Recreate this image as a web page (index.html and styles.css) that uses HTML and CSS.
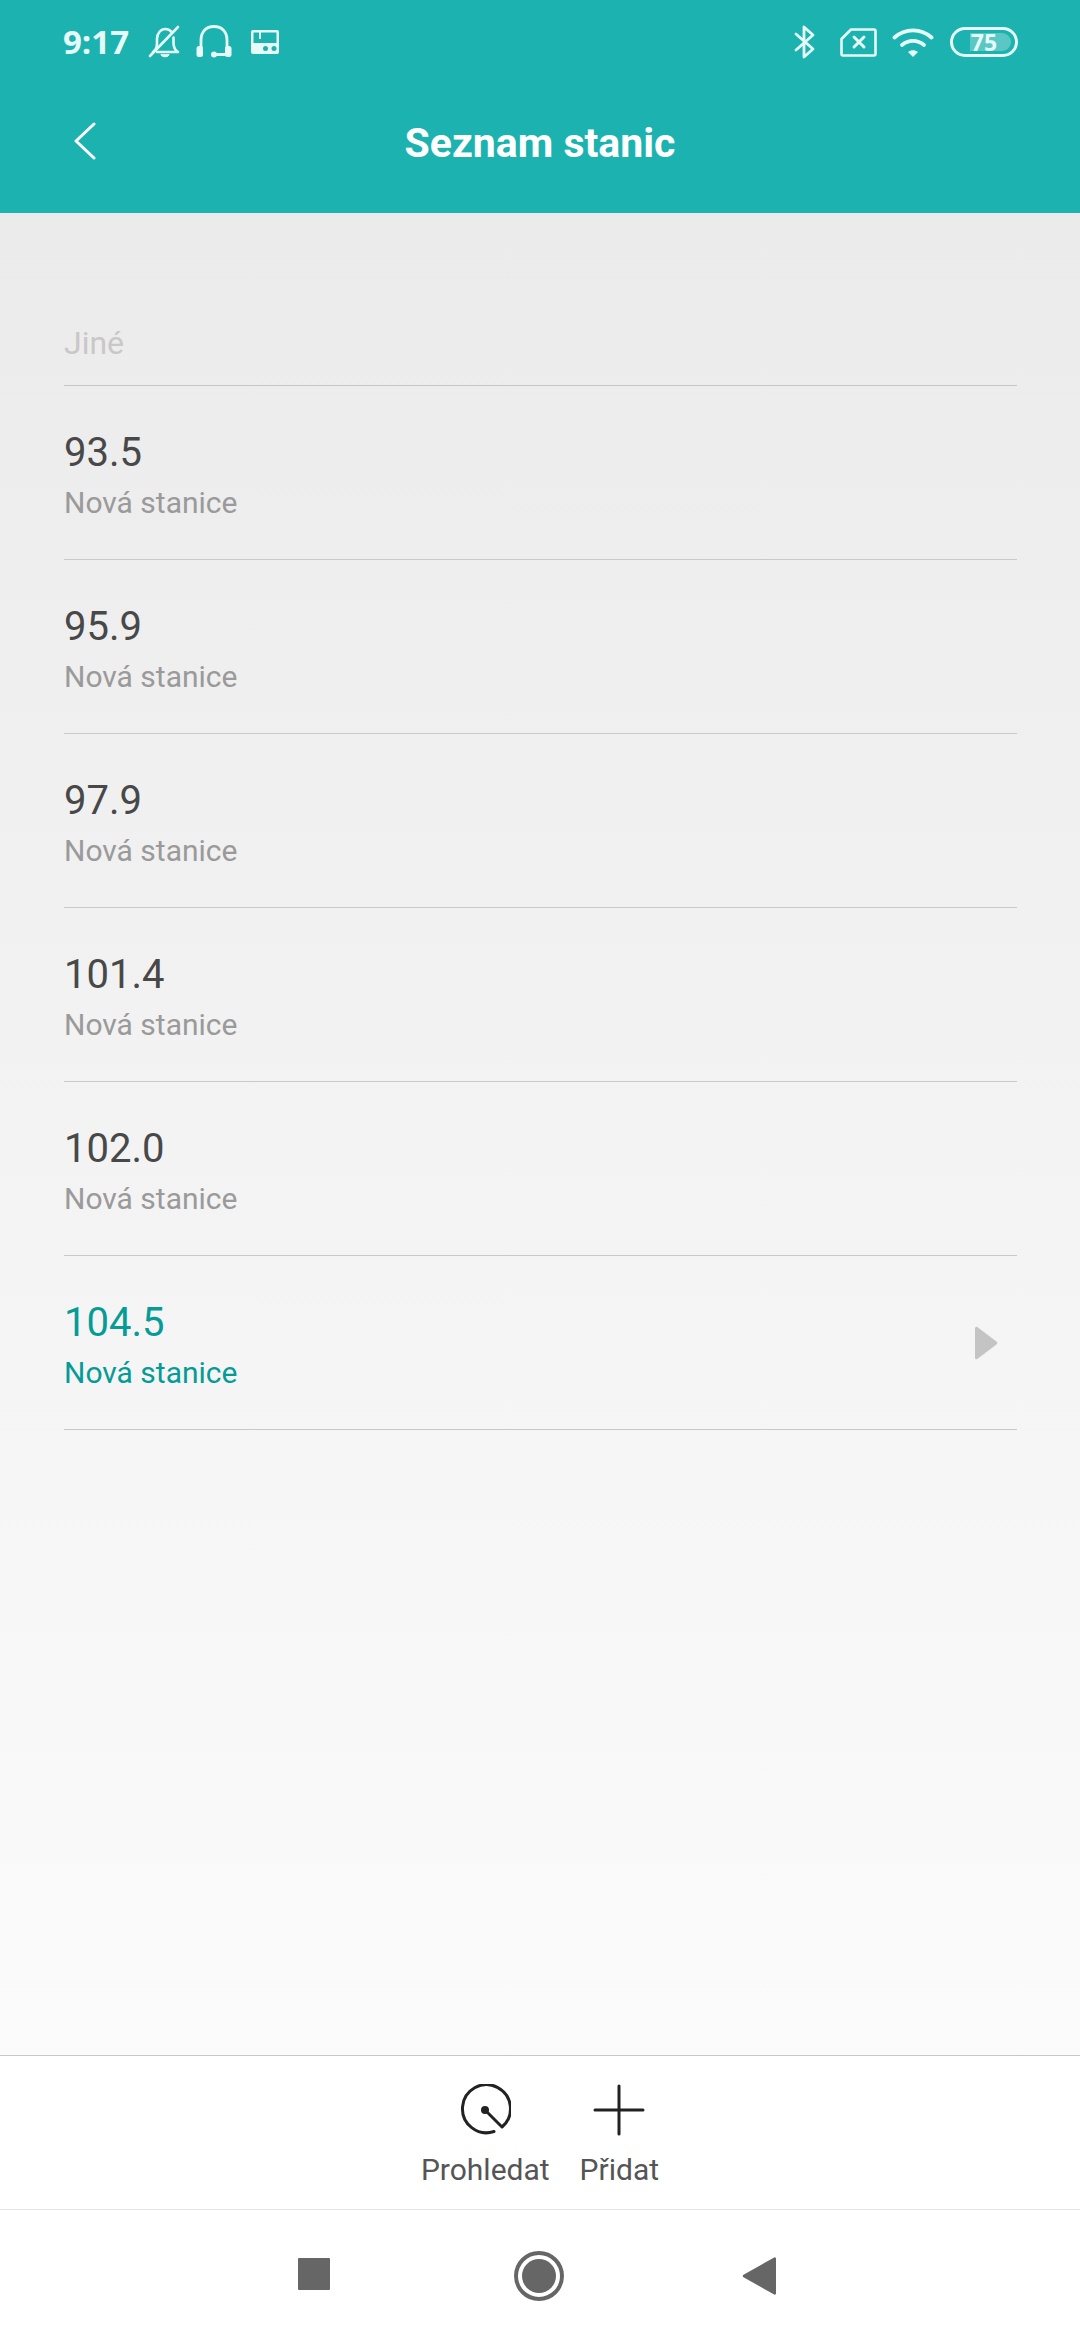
FILE: index.html
```html
<!DOCTYPE html>
<html lang="cs">
<head>
<meta charset="utf-8">
<title>Seznam stanic</title>
<link rel="stylesheet" href="styles.css">
</head>
<body>
<div class="app">
  <header class="header">
    <div class="status">
      <div class="status-left">
        <span class="time">9:17</span>
        <svg class="ic-bell" width="34" height="34" viewBox="0 0 34 34" fill="none" stroke="#e6fbf8" stroke-width="2.6" stroke-linecap="round" stroke-linejoin="round"><path d="M5 27c3-2 4-4 4-9v-4c0-6 4-10 8.500-10 3 0 5 1.500 6.500 3.500M25.500 12.500V18c0 5 1.500 7 4.500 9H9"/><path d="M2 31 30 2"/><path d="M13 30c1 2.500 7 2.500 8 0z" fill="#e6fbf8" stroke-width="1"/></svg>
        <svg class="ic-head" width="36" height="34" viewBox="0 0 36 34" fill="none" stroke="#e6fbf8" stroke-width="2.800" stroke-linecap="round"><path d="M5 24V15C5 7 10 1.500 18 1.500S31 7 31 15v9"/><path d="M18 29.500h13"/><rect x="0.500" y="21" width="6.500" height="11" rx="2.500" fill="#e6fbf8" stroke="none"/><rect x="29" y="21" width="6.500" height="11" rx="2.500" fill="#e6fbf8" stroke="none"/><circle cx="18" cy="29.500" r="3" fill="#e6fbf8" stroke="none"/></svg>
        <svg class="ic-radio" width="28" height="24" viewBox="0 0 28 24"><path fill="#e6fbf8" fill-rule="evenodd" d="M2 0h24a2 2 0 0 1 2 2v20a2 2 0 0 1-2 2H2a2 2 0 0 1-2-2V2a2 2 0 0 1 2-2zm.500 2.500V13h23V2.500H10V9H8V2.500z"/><circle cx="14.500" cy="18.500" r="2.500" fill="#1cb2af"/><circle cx="23" cy="18.500" r="2.500" fill="#1cb2af"/></svg>
      </div>
      <div class="status-right">
        <svg class="ic-bt" width="22" height="36" viewBox="0 0 22 36" fill="none" stroke="#e6fbf8" stroke-width="2.800" stroke-linecap="round" stroke-linejoin="round"><path d="M2 10 19 25 10 33V3l9 8L2 26"/></svg>
        <svg class="ic-sim" width="37" height="29" viewBox="0 0 37 29" fill="none" stroke="#e6fbf8" stroke-width="2.600" stroke-linecap="round" stroke-linejoin="round"><path d="M11 1.500h23a1.500 1.500 0 0 1 1.500 1.500v23a1.500 1.500 0 0 1-1.500 1.500H3A1.500 1.500 0 0 1 1.500 26V11z"/><path d="M14 9l10 10M24 9 14 19" stroke-width="3"/></svg>
        <svg class="ic-wifi" width="42" height="31" viewBox="0 0 42 31" fill="none" stroke="#e6fbf8" stroke-width="3.800" stroke-linecap="round"><path d="M2.500 10.500C13 1 29 1 39.500 10.500"/><path d="M10 18c6.500-5.500 15.500-5.500 22 0"/><path d="M16 25 21 30l5-5c-3-2.500-7-2.500-10 0z" fill="#e6fbf8" stroke="none"/></svg>
        <div class="battery"><span class="battery-fill"></span><span class="battery-num">75</span></div>
      </div>
    </div>
    <div class="titlebar">
      <svg class="back" width="24" height="38" viewBox="0 0 24 38" fill="none" stroke="#fff" stroke-width="3" stroke-linecap="round" stroke-linejoin="round"><path d="M21 2 3 19l18 17"/></svg>
      <h1 class="title">Seznam stanic</h1>
    </div>
  </header>

  <main class="content">
    <div class="group">Jiné</div>
    <div class="row"><div class="freq">93.5</div><div class="name">Nová stanice</div></div>
    <div class="row"><div class="freq">95.9</div><div class="name">Nová stanice</div></div>
    <div class="row"><div class="freq">97.9</div><div class="name">Nová stanice</div></div>
    <div class="row"><div class="freq">101.4</div><div class="name">Nová stanice</div></div>
    <div class="row"><div class="freq">102.0</div><div class="name">Nová stanice</div></div>
    <div class="row row-active">
      <div><div class="freq">104.5</div><div class="name">Nová stanice</div></div>
      <svg class="play" width="24" height="34" viewBox="0 0 24 34"><path fill="#c4c4c4" d="M1 2.500C1 .800 2.500.200 3.600 1.200L22.500 15.500c1 .900 1 2.100 0 3L3.600 32.800C2.500 33.800 1 33.200 1 31.500z"/></svg>
    </div>
  </main>

  <section class="actions">
    <div class="action">
      <svg width="52" height="52" viewBox="0 0 52 52" fill="none" stroke="#222" stroke-width="3" stroke-linecap="round" stroke-linejoin="round"><path d="M35 47.500A24 24 0 1 1 43 43L26 26"/><circle cx="26" cy="26" r="4" fill="#222" stroke="none"/></svg>
      <span class="action-label">Prohledat</span>
    </div>
    <div class="action">
      <svg width="52" height="52" viewBox="0 0 52 52" fill="none" stroke="#222" stroke-width="3" stroke-linecap="round"><path d="M26 2v48M2 26h48"/></svg>
      <span class="action-label">Přidat</span>
    </div>
  </section>

  <nav class="navbar">
    <span class="nav-square"></span>
    <span class="nav-home"></span>
    <svg width="36" height="38" viewBox="0 0 36 38"><path fill="#666" d="M34 1.500V36.500a1.200 1.200 0 0 1-1.800 1L1.500 20.300a1.500 1.500 0 0 1 0-2.600L32.200.500a1.200 1.200 0 0 1 1.800 1z"/></svg>
  </nav>
</div>
</body>
</html>
```

FILE: styles.css
```css
* { box-sizing: border-box; }
html, body { margin: 0; padding: 0; }
body { font-family: Roboto, "Noto Sans", sans-serif; background: #fff; }
.app { width: 1080px; height: 2340px; display: flex; flex-direction: column; overflow: hidden; }

.header { height: 213px; background: #1cb2af; flex: none; display: flex; flex-direction: column; }
.status { height: 84px; padding: 0 62px 0 63px; display: flex; justify-content: space-between; align-items: center; }
.status-left, .status-right { display: flex; align-items: center; }
.time { font-family: "Open Sans", sans-serif; font-weight: 700; font-size: 33px; line-height: 40px; color: #e6fbf8; letter-spacing: 0; width: 85px; }
.ic-head { margin-left: 14px; }
.ic-radio { margin-left: 19px; }
.ic-sim { margin-left: 24px; }
.ic-wifi { margin-left: 15px; }
.battery { position: relative; margin-left: 16px; width: 68px; height: 30px; border: 3px solid #e6fbf8; border-radius: 15px; }
.battery-fill { position: absolute; left: 17px; top: 3px; bottom: 3px; width: 41px; background: rgba(255,255,255,.28); border-radius: 0 10px 10px 0; }
.battery-num { position: absolute; left: 0; right: 0; top: -2px; text-align: center; font-family: "Open Sans", sans-serif; font-size: 23px; line-height: 28px; font-weight: 700; color: #e6fbf8; }

.titlebar { position: relative; flex: 1; display: flex; align-items: center; justify-content: center; padding-bottom: 12px; }
.back { position: absolute; left: 73px; top: 38px; }
.title { margin: 0; font-size: 41px; font-weight: 700; line-height: 50px; color: #fff; }

.content { flex: 1; padding: 0 63px 0 64px; background: linear-gradient(#ebebeb, #fbfbfb); }
.group { height: 173px; padding-top: 109px; font-size: 32px; line-height: 42px; color: #c8c8c8; border-bottom: 1.5px solid #c6c6c6; }
.row { height: 174px; padding-top: 40px; border-bottom: 1.5px solid #c9c9c9; display: block; }
.freq { font-size: 40px; line-height: 54px; color: #484848; }
.name { font-size: 30px; line-height: 46px; color: #9a9a9a; }
.row-active { display: flex; justify-content: space-between; align-items: flex-start; padding-right: 19px; }
.row-active .freq, .row-active .name { color: #069b97; }
.play { margin-top: 30px; }

.actions { height: 155px; flex: none; background: #fff; border-top: 1.5px solid #c8c8c8; border-bottom: 1px solid #e4e4e4; display: flex; justify-content: center; gap: 30px; padding-top: 28px; margin-bottom: 1px; }
.action { display: flex; flex-direction: column; align-items: center; gap: 13px; }
.action-label { font-size: 30px; line-height: 42px; color: #555; }

.navbar { height: 129px; flex: none; background: #fff; display: flex; align-items: center; justify-content: center; padding-right: 5px; }
.nav-square { width: 32px; height: 32px; background: #666; border-radius: 1px; margin-right: 184px; margin-bottom: 4px; }
.nav-home { width: 50px; height: 50px; border: 4px solid #666; border-radius: 50%; position: relative; margin-right: 178px; }
.nav-home::after { content: ""; position: absolute; inset: 4px; background: #666; border-radius: 50%; }
```
